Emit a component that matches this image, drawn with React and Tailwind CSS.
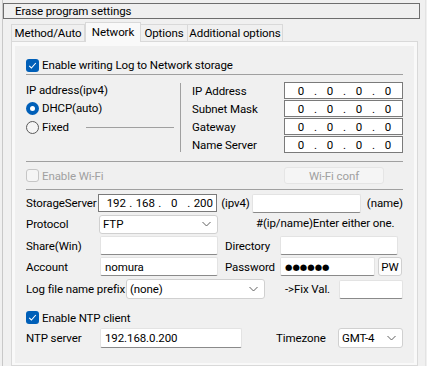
import React from "react";

const Check = () => (
  <span className="w-[13px] h-[13px] rounded-[3px] bg-[#005fb8] flex items-center justify-center shrink-0">
    <svg width="9" height="9" viewBox="0 0 9 9">
      <polyline points="1.2,4.8 3.4,7 7.8,2" fill="none" stroke="#fff" strokeWidth="1.1" />
    </svg>
  </span>
);

const Chevron = () => (
  <svg width="9" height="6" viewBox="0 0 9 6" className="shrink-0">
    <polyline points="0.5,1 4.5,5 8.5,1" fill="none" stroke="#606060" strokeWidth="1" />
  </svg>
);

const IpBox = ({ parts, w = "w-[119px]", h = "h-[17px]", pl = "pl-[6px]" }) => (
  <div className={`${w} ${h} bg-white border border-[#7a7a7a] flex items-center ${pl} shrink-0`}>
    {parts.map((p, i) => (
      <React.Fragment key={i}>
        <span className="w-[22px] text-center">{p}</span>
        {i < 3 && <span className="w-[7px] text-center">.</span>}
      </React.Fragment>
    ))}
  </div>
);

const TextBox = ({ w, h = "h-[19px]", children }) => (
  <div className={`${w} ${h} bg-white border border-[#e3e3e3] border-b-[#8a8a8a] rounded-[2px] flex items-center px-[4px] shrink-0`}>
    {children}
  </div>
);

const Combo = ({ w, h = "h-[19px]", children }) => (
  <div className={`${w} ${h} bg-white border border-[#d0d0d0] rounded-[3px] flex items-center pl-[3px] pr-[6px] shrink-0`}>
    <span className="flex-1">{children}</span>
    <Chevron />
  </div>
);

export default function App() {
  return (
    <div
      className="w-[427px] h-[366px] bg-[#f0f0f0] relative overflow-hidden text-[11.5px] leading-[16px] text-black whitespace-nowrap tracking-[-0.1px]"
      style={{ fontFamily: "Roboto, sans-serif" }}
    >
      <div className="absolute left-[2px] top-[0px] bottom-0 w-px bg-[#c8c8c8]" />
      <div className="absolute right-[1px] top-[0px] bottom-0 w-px bg-[#e3e3e3]" />
      <div className="ml-[3px] w-[417px] pt-[3px]">
        <div className="h-[16px] border border-[#6e6e6e] bg-[#f0f0f0] flex items-center pl-[11px]">
          Erase program settings
        </div>
      </div>

      {/* tabs */}
      <div className="ml-[11px] mt-[3px] h-[19px] flex items-end relative z-10">
        <div className="w-[74px] h-[17px] border border-b-0 border-[#d9d9d9] bg-[#f0f0f0] flex items-center justify-center">Method/Auto</div>
        <div className="w-[56px] h-[20px] border border-b-0 border-[#d9d9d9] bg-[#f9f9f9] flex items-start pt-[1px] justify-center -mb-px">Network</div>
        <div className="w-[47px] h-[17px] border border-b-0 border-l-0 border-[#d9d9d9] bg-[#f0f0f0] flex items-center justify-center">Options</div>
        <div className="w-[95px] h-[17px] border border-b-0 border-l-0 border-[#d9d9d9] bg-[#f0f0f0] flex items-center justify-center">Additional options</div>
      </div>

      {/* panel */}
      <div className="ml-[11px] w-[407px] h-[325px] border border-[#d9d9d9] bg-[#f9f9f9] pl-[3px] pt-[4px] pr-[3px] pb-[2px]">
        <div className="w-full h-full bg-[#f0f0f0] px-[11px] flex flex-col">
          {/* enable log */}
          <div className="mt-[12px] h-[14px] flex items-center gap-[3px]">
            <Check />
            <span>Enable writing Log to Network storage</span>
          </div>
          <div className="mt-[2px] h-px bg-[#a0a0a0]" />

          {/* ip section */}
          <div className="mt-[7px] h-[72px] flex">
            <div className="w-[148px] flex flex-col">
              <div className="h-[16px]">IP address(ipv4)</div>
              <div className="mt-[2px] h-[16px] flex items-center gap-[3px]">
                <span className="w-[13px] h-[13px] rounded-full bg-[#005fb8] flex items-center justify-center">
                  <span className="w-[5px] h-[5px] rounded-full bg-white" />
                </span>
                <span>DHCP(auto)</span>
              </div>
              <div className="mt-[3px] h-[16px] flex items-center gap-[3px]">
                <span className="w-[13px] h-[13px] rounded-full border border-[#5a5a5a] bg-[#f5f5f5]" />
                <span>Fixed</span>
                <span className="ml-auto w-[88px] h-px bg-[#a0a0a0]" />
              </div>
            </div>
            <div className="ml-[6px] mt-[1px] w-px h-[69px] bg-[#a0a0a0]" />
            <div className="ml-[11px] flex-1 flex flex-col gap-[1px]">
              {["IP Address", "Subnet Mask", "Gateway", "Name Server"].map((l) => (
                <div key={l} className="h-[17px] flex items-center">
                  <span>{l}</span>
                  <div className="ml-auto">
                    <IpBox parts={["0", "0", "0", "0"]} pl="pl-[5px]" />
                  </div>
                </div>
              ))}
            </div>
          </div>
          <div className="mt-[7px] h-px bg-[#a0a0a0]" />

          {/* wifi */}
          <div className="mt-[5px] h-[17px] flex items-center">
            <span className="w-[13px] h-[13px] rounded-[3px] border border-[#c6c6c6] bg-[#f5f5f5] shrink-0" />
            <span className="ml-[3px] w-[242px] text-[#a0a0a0]">Enable Wi-Fi</span>
            <div className="w-[100px] h-[17px] rounded-[3px] border border-[#e5e5e5] bg-[#f5f5f5] text-[#a0a0a0] flex items-center justify-center">Wi-Fi conf</div>
          </div>
          <div className="mt-[5px] h-px bg-[#a0a0a0]" />

          {/* storage server */}
          <div className="mt-[4px] h-[18px] flex items-center">
            <span className="w-[73px]">StorageServer</span>
            <IpBox parts={["192", "168", "0", "200"]} h="h-[18px]" />
            <span className="w-[35px] pl-[4px]">(ipv4)</span>
            <TextBox w="w-[109px]" />
            <span className="pl-[6px]">(name)</span>
          </div>

          {/* protocol */}
          <div className="mt-[3px] h-[18px] flex items-center">
            <span className="w-[73px]">Protocol</span>
            <Combo w="w-[119px]" h="h-[19px]">FTP</Combo>
            <span className="pl-[38px] -mt-[3px]">#(ip/name)Enter either one.</span>
          </div>

          {/* share */}
          <div className="mt-[3px] h-[19px] flex items-center">
            <span className="w-[74px]">Share(Win)</span>
            <TextBox w="w-[118px]" />
            <span className="w-[62px] pl-[7px]">Directory</span>
            <TextBox w="w-[118px]" />
          </div>

          {/* account */}
          <div className="mt-[2px] h-[19px] flex items-center">
            <span className="w-[74px]">Account</span>
            <TextBox w="w-[118px]">nomura</TextBox>
            <span className="w-[62px] pl-[7px]">Password</span>
            <TextBox w="w-[95px]">
              <span className="text-[8.5px] tracking-[0px] leading-[10px]" style={{ fontFamily: "'DejaVu Sans', sans-serif" }}>●●●●●●</span>
            </TextBox>
            <div className="ml-[3px] w-[24px] h-[19px] rounded-[3px] border border-[#d0d0d0] bg-[#fdfdfd] flex items-center justify-center">PW</div>
          </div>

          {/* log prefix */}
          <div className="mt-[3px] h-[20px] flex items-center">
            <span className="w-[100px]">Log file name prefix</span>
            <Combo w="w-[139px]" h="h-[20px]">(none)</Combo>
            <span className="w-[74px] pl-[20px]">-&gt;Fix Val.</span>
            <TextBox w="w-[64px]" />
          </div>

          {/* ntp */}
          <div className="mt-[12px] h-[13px] flex items-center gap-[3px]">
            <Check />
            <span>Enable NTP client</span>
          </div>
          <div className="mt-[4px] h-[20px] flex items-center">
            <span className="w-[74px]">NTP server</span>
            <TextBox w="w-[142px]" h="h-[20px]">192.168.0.200</TextBox>
            <span className="w-[96px] pl-[34px]">Timezone</span>
            <Combo w="w-[65px]" h="h-[20px]">GMT-4</Combo>
          </div>
        </div>
      </div>
    </div>
  );
}
